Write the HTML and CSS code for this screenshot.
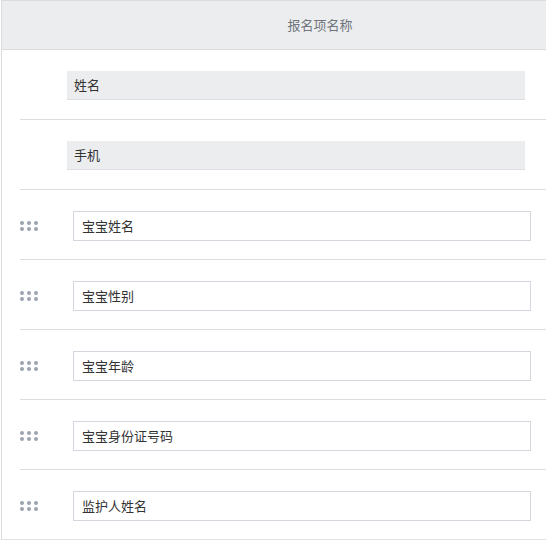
FILE: index.html
```html
<!DOCTYPE html>
<html lang="zh">
<head>
<meta charset="utf-8">
<link rel="stylesheet" href="styles.css">
</head>
<body>
<div class="table">
  <div class="head"><span class="head-title">报名项名称</span></div>
  <div class="row fixed"><div class="fixed-box">姓名</div></div>
  <div class="row fixed"><div class="fixed-box">手机</div></div>
  <div class="row editable">
    <div class="handle"><i></i><i></i><i></i><i></i><i></i><i></i></div>
    <input class="field" type="text" value="宝宝姓名">
  </div>
  <div class="row editable">
    <div class="handle"><i></i><i></i><i></i><i></i><i></i><i></i></div>
    <input class="field" type="text" value="宝宝性别">
  </div>
  <div class="row editable">
    <div class="handle"><i></i><i></i><i></i><i></i><i></i><i></i></div>
    <input class="field" type="text" value="宝宝年龄">
  </div>
  <div class="row editable">
    <div class="handle"><i></i><i></i><i></i><i></i><i></i><i></i></div>
    <input class="field" type="text" value="宝宝身份证号码">
  </div>
  <div class="row editable last">
    <div class="handle"><i></i><i></i><i></i><i></i><i></i><i></i></div>
    <input class="field" type="text" value="监护人姓名">
  </div>
</div>
</body>
</html>
```
FILE: styles.css
```css
html, body {
  margin: 0;
  padding: 0;
  background: #fff;
  overflow: hidden;
}
body {
  font-family: "Noto Sans CJK SC", "Noto Sans", sans-serif;
  font-size: 13px;
  color: #333;
}
.table {
  margin-left: 1px;
  width: 545px;
  border-left: 1px solid #dcdcdc;
  border-top: 1px solid #dcdcdc;
  border-bottom: 1px solid #e2e2e2;
  box-sizing: border-box;
}
.head {
  height: 48px;
  background: #ebedef;
  border-bottom: 1px solid #dadcdf;
  display: flex;
  align-items: center;
  justify-content: center;
  padding-left: 92px;
  color: #71757b;
}
.head-title {
  line-height: 48px;
}
.row {
  margin-left: 18px;
  border-bottom: 1px solid #dcdde0;
  display: flex;
  align-items: flex-start;
  padding-top: 21px;
  box-sizing: content-box;
  height: 48px;
}
.row.last {
  border-bottom: none;
}
.fixed {
  padding-left: 47px;
}
.fixed-box {
  width: 451px;
  height: 28px;
  line-height: 28px;
  background: #ebedef;
  border-bottom: 1px solid #dcdfe3;
  padding-left: 7px;
  box-sizing: content-box;
  color: #333;
}
.handle {
  width: 53px;
  height: 30px;
  display: grid;
  grid-template-columns: repeat(3, 4px);
  grid-template-rows: repeat(2, 4px);
  gap: 2px 3px;
  align-content: center;
}
.handle i {
  display: block;
  width: 4px;
  height: 4px;
  border-radius: 50%;
  background: #9ea5b1;
}
.field {
  width: 458px;
  height: 30px;
  box-sizing: border-box;
  border: 1px solid #d3d6dd;
  border-radius: 0;
  padding: 0 8px 1px;
  margin: 0;
  font-family: "Noto Sans CJK SC", "Noto Sans", sans-serif;
  font-size: 13px;
  color: #333;
  background: #fff;
  outline: none;
}
```
